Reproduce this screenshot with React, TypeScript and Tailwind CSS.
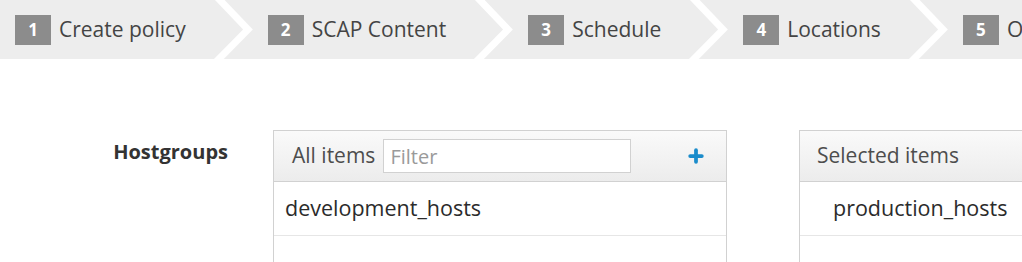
import { Plus } from "lucide-react";

const steps = ["Create policy", "SCAP Content", "Schedule", "Locations", "Organizations"];

function Chevron() {
  return (
    <svg width="59" height="59" viewBox="0 0 59 59" className="shrink-0 overflow-visible ml-[23px]">
      <polyline points="7,-4 39,29.5 3,66" fill="none" stroke="#ffffff" strokeWidth="7" />
    </svg>
  );
}

export default function App() {
  return (
    <div className="h-[262px] w-[1022px] overflow-hidden bg-white font-['Open_Sans',sans-serif]">
      {/* wizard steps */}
      <div className="flex h-[59px] items-center whitespace-nowrap bg-[#ededed] pl-[15px]">
        {steps.map((label, i) => (
          <div key={label} className="flex shrink-0 items-center">
            <span className="grid h-[30px] w-[36px] place-items-center bg-[#8c8c8c] text-[17px] font-bold text-white">
              {i + 1}
            </span>
            <span className="ml-[8px] text-[21px] text-[#444]">{label}</span>
            {i < steps.length - 1 && <Chevron />}
          </div>
        ))}
      </div>

      {/* dual list */}
      <div className="mt-[71px] flex whitespace-nowrap">
        <div className="w-[273px] shrink-0 pr-[45px] pt-[10px] text-right text-[20px] font-bold leading-[24px] text-[#333]">
          Hostgroups
        </div>

        <div className="w-[454px] shrink-0 border border-[#d1d1d1]">
          <div className="flex h-[51px] items-center border-b border-[#d1d1d1] bg-gradient-to-b from-[#fafafa] to-[#ececec] pl-[18px] pr-[20px]">
            <span className="text-[21px] text-[#4d4d4d]">All items</span>
            <input
              placeholder="Filter"
              className="ml-[8px] h-[34px] w-[248px] border border-[#d1d1d1] bg-white px-[6px] text-[20px] text-[#333] outline-none placeholder:text-[#9a9a9a]"
            />
            <Plus className="ml-auto h-[20px] w-[20px] text-[#1b8ccb]" strokeWidth={4.5} />
          </div>
          <div className="flex h-[54px] items-center border-b border-[#e6e6e6] pl-[11px] text-[21.5px] text-[#2b2b2b]">
            development_hosts
          </div>
          <div className="h-[60px]" />
        </div>

        <div className="ml-[72px] w-[300px] shrink-0 border border-[#d1d1d1]">
          <div className="flex h-[51px] items-center border-b border-[#d1d1d1] bg-gradient-to-b from-[#fafafa] to-[#ececec] pl-[17px]">
            <span className="text-[21px] text-[#4d4d4d]">Selected items</span>
          </div>
          <div className="flex h-[54px] items-center border-b border-[#e6e6e6] pl-[33px] text-[21.5px] text-[#2b2b2b]">
            production_hosts
          </div>
          <div className="h-[60px]" />
        </div>
      </div>
    </div>
  );
}
